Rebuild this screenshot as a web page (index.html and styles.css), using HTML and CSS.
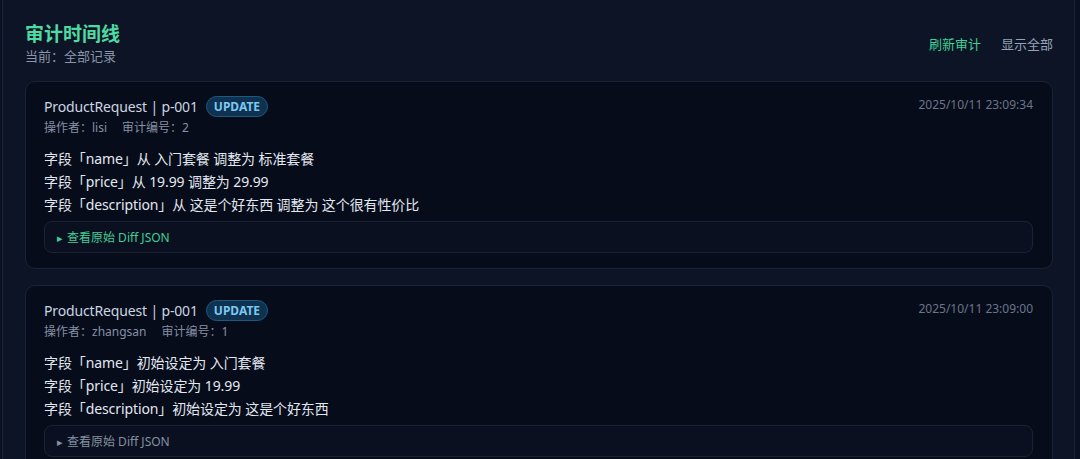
FILE: index.html
```html
<!DOCTYPE html>
<html lang="zh">
<head>
<meta charset="utf-8">
<link rel="stylesheet" href="styles.css">
</head>
<body>
<div class="panel">
  <header class="head">
    <div>
      <h1 class="title">审计时间线</h1>
      <div class="sub">当前：全部记录</div>
    </div>
    <div class="actions">
      <span class="link green">刷新审计</span>
      <span class="link">显示全部</span>
    </div>
  </header>

  <div class="list">
    <section class="card">
      <div class="card-head">
        <div>
          <div class="name-row"><span class="name">ProductRequest | p-001</span><span class="badge">UPDATE</span></div>
          <div class="meta"><span>操作者：lisi</span><span>审计编号：2</span></div>
        </div>
        <div class="time">2025/10/11 23:09:34</div>
      </div>
      <div class="lines">
        <div>字段「name」从 入门套餐 调整为 标准套餐</div>
        <div>字段「price」从 19.99 调整为 29.99</div>
        <div>字段「description」从 这是个好东西 调整为 这个很有性价比</div>
      </div>
      <div class="diff green"><span class="tri">▸</span>查看原始 Diff JSON</div>
    </section>

    <section class="card">
      <div class="card-head">
        <div>
          <div class="name-row"><span class="name">ProductRequest | p-001</span><span class="badge">UPDATE</span></div>
          <div class="meta"><span>操作者：zhangsan</span><span>审计编号：1</span></div>
        </div>
        <div class="time">2025/10/11 23:09:00</div>
      </div>
      <div class="lines">
        <div>字段「name」初始设定为 入门套餐</div>
        <div>字段「price」初始设定为 19.99</div>
        <div>字段「description」初始设定为 这是个好东西</div>
      </div>
      <div class="diff dim"><span class="tri">▸</span>查看原始 Diff JSON</div>
    </section>
  </div>
</div>
</body>
</html>
```

FILE: styles.css
```css
html, body {
  margin: 0;
  background: #0a101f;
  height: 100%;
  overflow: hidden;
}
body {
  font-family: "Noto Sans", "Noto Sans CJK SC", sans-serif;
  color: #e2e8f0;
}
.panel {
  margin: 0 5px 0 2px;
  border: 1px solid #1b2436;
  border-top: none;
  background: #0d1425;
  min-height: 600px;
  padding: 21px 21px 0 22px;
}
.head {
  display: flex;
  justify-content: space-between;
  align-items: center;
}
.title {
  margin: 0;
  font-size: 19px;
  line-height: 26px;
  font-weight: 700;
  color: #4ddba3;
}
.sub {
  font-size: 13px;
  line-height: 18px;
  color: #8a96aa;
}
.actions {
  display: flex;
  gap: 20px;
  font-size: 13px;
  color: #94a3b8;
}
.green { color: #3fcf95; }
.list {
  margin-top: 16px;
  display: flex;
  flex-direction: column;
  gap: 16px;
}
.card {
  background: #070c1b;
  border: 1px solid #1a2335;
  border-radius: 10px;
  padding: 14px 19px 15px 18px;
}
.card-head {
  display: flex;
  justify-content: space-between;
  align-items: flex-start;
}
.name-row {
  display: flex;
  align-items: center;
  gap: 8px;
  height: 21px;
}
.name {
  font-size: 14px;
  color: #cbd5e1;
  letter-spacing: -0.15px;
}
.badge {
  font-size: 12px;
  font-weight: 700;
  color: #7cc8f2;
  background: #0e324f;
  border: 1px solid #1d5a82;
  border-radius: 11px;
  padding: 0 7px;
  line-height: 19px;
}
.meta {
  margin-top: 2px;
  font-size: 12px;
  line-height: 18px;
  color: #8590a3;
  display: flex;
  gap: 15px;
}
.time {
  font-size: 12px;
  color: #6b7588;
  line-height: 18px;
}
.lines {
  margin-top: 10px;
  font-size: 14px;
  line-height: 23px;
  color: #e2e8f0;
  letter-spacing: -0.1px;
}
.diff {
  margin-top: 5px;
  height: 30px;
  border: 1px solid #1a2335;
  border-radius: 8px;
  background: #0a1020;
  display: flex;
  align-items: center;
  padding-left: 12px;
  font-size: 12px;
}
.diff.dim { color: #8590a3; }
.tri {
  font-size: 11px;
  margin-right: 4px;
}
```
